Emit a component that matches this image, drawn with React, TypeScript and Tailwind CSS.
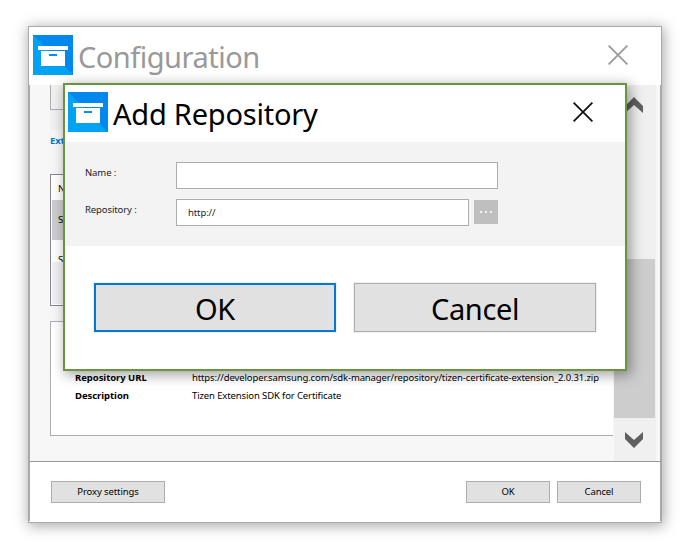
import type { ReactNode } from "react";

function BoxIcon() {
  return (
    <svg className="block size-10 shrink-0" viewBox="0 0 40 40" shapeRendering="crispEdges">
      <rect width="40" height="40" fill="#0088ee" />
      <path d="M0 0L40 40H0z" fill="#00a2f4" shapeRendering="auto" />
      <path d="M5 11h30v4H5zM8 16h24v15H8z" fill="#fff" />
      <rect x="16" y="19" width="8" height="2" fill="#0090f0" />
    </svg>
  );
}

function CloseIcon({ color }: { color: string }) {
  return (
    <svg className="block size-5 shrink-0" viewBox="0 0 20 20" stroke={color} strokeWidth="1.8">
      <path d="M.6.6l18.8 18.8M19.4.6L.6 19.4" />
    </svg>
  );
}

function Chevron({ flip }: { flip?: boolean }) {
  return (
    <svg className={flip ? "block h-4 w-[18px] rotate-180" : "block h-4 w-[18px]"} viewBox="0 0 18 16" fill="#606060">
      <path d="M9 0l9 9v7L9 8 0 16V9z" />
    </svg>
  );
}

function SmallButton({ className, children }: { className: string; children: ReactNode }) {
  return (
    <button className={"flex h-[22px] items-center justify-center border border-[#adadad] bg-[#e1e1e1] text-[9.5px] tracking-[-0.1px] text-black " + className}>
      {children}
    </button>
  );
}

function AddRepositoryDialog() {
  return (
    <section className="absolute top-[83px] left-[63px] h-[288px] w-[564px] border-2 border-[#6b9440] bg-white shadow-[3px_3px_12px_1px_rgba(0,0,0,0.36)]">
      <header className="flex h-[57px] pt-[7px] pl-[3px]">
        <BoxIcon />
        <h2 className="ml-[5px] w-[460px] text-[29px] leading-[44px] tracking-[-0.22px] text-black">Add Repository</h2>
        <div className="pt-[10px]">
          <CloseIcon color="#111" />
        </div>
      </header>
      <div className="h-[104px] bg-[#f3f3f3] pt-5 pl-5 text-[9.5px] tracking-[-0.1px] text-[#222]">
        <div className="flex h-[27px]">
          <label className="w-[91px] leading-[21px]">Name :</label>
          <div className="h-[27px] w-[322px] border border-[#abadb3] bg-white" />
        </div>
        <div className="mt-[10px] flex h-[27px]">
          <label className="w-[91px] leading-[21px]">Repository :</label>
          <div className="h-[27px] w-[293px] border border-[#abadb3] bg-white pl-[11px] leading-[25px]">http://</div>
          <button className="mt-px ml-[5px] flex size-6 items-center justify-center gap-[3px] bg-[#bfbfbf]">
            <i className="size-[2px] bg-[#f5f5f5]" />
            <i className="size-[2px] bg-[#f5f5f5]" />
            <i className="size-[2px] bg-[#f5f5f5]" />
          </button>
        </div>
      </div>
      <footer className="flex gap-[18px] pt-[37px] pl-[29px] text-[29px] tracking-[-0.35px] text-black">
        <button className="flex h-[49px] w-[242px] items-center justify-center border-2 border-[#0078d7] bg-[#e1e1e1] pt-[2px] shadow-[0_0_0_1px_#f0f0f0]">OK</button>
        <button className="flex h-[49px] w-[242px] items-center justify-center border border-[#adadad] bg-[#e1e1e1] pt-[2px] shadow-[0_0_0_1px_#f0f0f0]">Cancel</button>
      </footer>
    </section>
  );
}

export default function App() {
  return (
    <main className="relative h-[558px] w-[691px] overflow-hidden bg-white pt-[26px] pl-7 font-['Noto_Sans',sans-serif]">
      <div className="flex h-[497px] w-[634px] flex-col border border-[#a9a9a9] bg-white shadow-[1px_2px_13px_1px_rgba(0,0,0,0.34)]">
        <header className="flex h-[58px] shrink-0 pt-2 pl-1">
          <BoxIcon />
          <h1 className="ml-[5px] w-[530px] text-[29px] leading-[44px] tracking-[-0.5px] text-[#999]">Configuration</h1>
          <div className="pt-[10px]">
            <CloseIcon color="#999" />
          </div>
        </header>
        <div className="flex h-[376px] shrink-0 border-x border-[#a9a9a9] bg-[#f7f7f7]">
          <div className="mr-px w-[583px] pl-5 text-[9.5px] tracking-[-0.12px] text-black">
            <div className="h-[45px] bg-[#f0f0f0]">
              <div className="h-[25px] border border-t-0 border-[#abadb3]" />
            </div>
            <h3 className="h-11 leading-[22px] font-bold text-[#0078d7]">Extension SDK</h3>
            <div className="h-[132px] border border-[#828790] bg-white p-px">
              <div className="h-6 pl-1.5 leading-[26px]">Name</div>
              <div className="h-10 bg-[#cdcdcd] pl-1.5 leading-10">Samsung Certificate Extension</div>
              <div className="h-[22px] overflow-hidden pl-1.5 leading-10">Samsung Wearable Extension</div>
              <div className="h-[42px] bg-[#f0f0f0]" />
            </div>
            <dl className="mt-[15px] h-[115px] border border-r-0 border-[#abadb3] bg-white pt-[48px] pl-6">
              <div className="flex h-[17px] items-center">
                <dt className="w-[117px] shrink-0 font-bold tracking-[-0.05px]">Repository URL</dt>
                <dd className="whitespace-nowrap">https://developer.samsung.com/sdk-manager/repository/tizen-certificate-extension_2.0.31.zip</dd>
              </div>
              <div className="flex h-[18px] items-center">
                <dt className="w-[117px] shrink-0 font-bold tracking-[-0.05px]">Description</dt>
                <dd>Tizen Extension SDK for Certificate</dd>
              </div>
            </dl>
          </div>
          <div className="flex w-[42px] flex-col items-center bg-[#f0f0f0]">
            <div className="mr-[2px] h-[174px] pt-3">
              <Chevron />
            </div>
            <div className="mr-px h-[159px] w-[41px] bg-[#cdcdcd]" />
            <div className="mt-[14px] mr-[2px]">
              <Chevron flip />
            </div>
          </div>
        </div>
        <footer className="mb-px flex flex-1 border-x border-t border-x-[#a9a9a9] border-t-[#999] pt-[19px] pl-[21px]">
          <SmallButton className="w-[114px]">Proxy settings</SmallButton>
          <SmallButton className="ml-[301px] w-[84px]">OK</SmallButton>
          <SmallButton className="ml-[7px] w-[84px]">Cancel</SmallButton>
        </footer>
      </div>
      <AddRepositoryDialog />
    </main>
  );
}
